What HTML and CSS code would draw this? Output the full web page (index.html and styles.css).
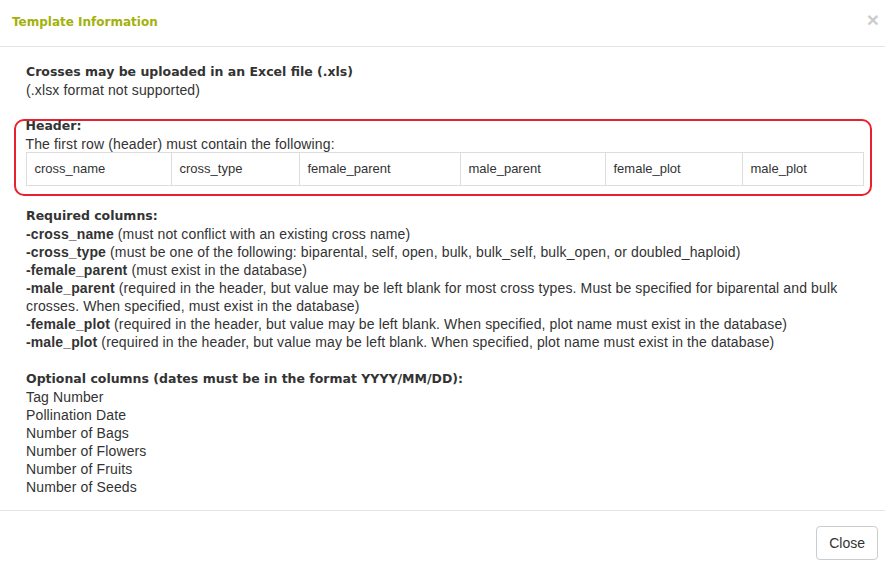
FILE: index.html
```html
<!DOCTYPE html>
<html>
<head>
<meta charset="utf-8">
<link rel="stylesheet" href="styles.css">
</head>
<body>
<div class="modal">
  <div class="modal-header">
    <h4 class="modal-title">Template Information</h4>
    <button class="close" type="button">&times;</button>
  </div>
  <div class="modal-body">
    <div class="section first">
      <b class="heading">Crosses may be uploaded in an Excel file (.xls)</b><br>
      (.xlsx format not supported)
    </div>
    <div class="highlight">
      <div class="hl-title"><b class="heading">Header:</b></div>
      <div class="hl-intro">The first row (header) must contain the following:</div>
      <table class="cols">
        <tr>
          <td class="c1">cross_name</td>
          <td class="c2">cross_type</td>
          <td class="c3">female_parent</td>
          <td class="c4">male_parent</td>
          <td class="c5">female_plot</td>
          <td class="c6">male_plot</td>
        </tr>
      </table>
    </div>
    <div class="section">
      <b class="heading">Required columns:</b><br>
      <b>-cross_name</b> (must not conflict with an existing cross name)<br>
      <b>-cross_type</b> (must be one of the following: biparental, self, open, bulk, bulk_self, bulk_open, or doubled_haploid)<br>
      <b>-female_parent</b> (must exist in the database)<br>
      <b>-male_parent</b> (required in the header, but value may be left blank for most cross types. Must be specified for biparental and bulk crosses. When specified, must exist in the database)<br>
      <b>-female_plot</b> (required in the header, but value may be left blank. When specified, plot name must exist in the database)<br>
      <b>-male_plot</b> (required in the header, but value may be left blank. When specified, plot name must exist in the database)
    </div>
    <div class="section">
      <b class="heading">Optional columns (dates must be in the format YYYY/MM/DD):</b><br>
      Tag Number<br>
      Pollination Date<br>
      Number of Bags<br>
      Number of Flowers<br>
      Number of Fruits<br>
      Number of Seeds
    </div>
  </div>
  <div class="modal-footer">
    <button class="btn" type="button">Close</button>
  </div>
</div>
</body>
</html>
```
FILE: styles.css
```css
html, body {
  margin: 0;
  padding: 0;
  background: #fff;
}
body {
  font-family: "Liberation Sans", Arial, sans-serif;
  font-size: 14px;
  line-height: 18px;
  color: #333;
}
.modal {
  width: 885px;
  height: 569px;
  display: flex;
  flex-direction: column;
  overflow: hidden;
}
.modal-header {
  flex-shrink: 0;
  height: 47px;
  box-sizing: border-box;
  border-bottom: 1px solid #e5e5e5;
  display: flex;
  align-items: center;
  justify-content: space-between;
  padding: 0 6px 0 12px;
}
.modal-title {
  margin: 0;
  font-family: "DejaVu Sans", sans-serif;
  font-weight: bold;
  font-size: 12px;
  line-height: 18px;
  color: #a3b10c;
  margin-top: -2px;
  letter-spacing: 0;
}
.close {
  border: 0;
  background: none;
  padding: 0;
  font-family: "Liberation Sans", Arial, sans-serif;
  font-size: 21px;
  font-weight: bold;
  color: #000;
  opacity: 0.2;
  line-height: 1;
  margin-top: -8px;
}
.modal-body {
  padding: 15px 13px 0 14px;
  flex: 1;
  min-height: 0;
  letter-spacing: 0.13px;
}
.heading {
  font-family: "DejaVu Sans", sans-serif;
  font-size: 12.5px;
  letter-spacing: 0;
}
.section {
  padding: 0 12px;
  margin-bottom: 18px;
}
.section.first {
  margin-bottom: 20px;
}
.highlight {
  border: 2.5px solid #e8212f;
  border-radius: 10px;
  padding: 0 6.5px 8.5px 9.5px;
  margin-bottom: 10px;
}
.hl-title {
  margin-top: -5.5px;
}
.hl-intro {
  height: 17px;
}
.cols {
  width: 100%;
  border-collapse: collapse;
  font-size: 13px;
  letter-spacing: 0;
}
.cols td {
  border: 1px solid #ddd;
  padding: 7px 8px;
  line-height: 18px;
  color: #333;
}
.c1 { width: 128px; }
.c2 { width: 111px; }
.c3 { width: 144px; }
.c4 { width: 128px; }
.c5 { width: 120px; }
.modal-footer {
  flex-shrink: 0;
  border-top: 1px solid #e5e5e5;
  height: 59px;
  box-sizing: border-box;
  display: flex;
  justify-content: flex-end;
  align-items: center;
  padding: 0 7px 0 0;
}
.btn {
  font-family: "Liberation Sans", Arial, sans-serif;
  font-size: 14px;
  color: #333;
  background: #fff;
  border: 1px solid #ccc;
  border-radius: 4px;
  height: 34px;
  padding: 0 12px;
  margin-top: 5px;
}
```
